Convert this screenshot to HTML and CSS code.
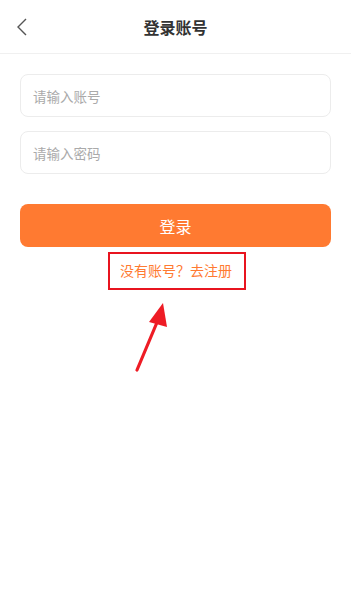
FILE: index.html
```html
<!DOCTYPE html>
<html lang="zh">
<head>
<meta charset="utf-8">
<link rel="stylesheet" href="styles.css">
</head>
<body>
<div class="page">
  <header class="nav">
    <span class="back">
      <svg width="12" height="18" viewBox="0 0 12 18"><path d="M10 1 L2 9 L10 17" fill="none" stroke="#555" stroke-width="1.4"/></svg>
    </span>
    <h1 class="title">登录账号</h1>
  </header>
  <main class="form">
    <div class="field">请输入账号</div>
    <div class="field">请输入密码</div>
    <button class="submit">登录</button>
    <div class="reg-wrap">
      <span class="reg">没有账号？去注册</span>
      <svg class="arrow" width="60" height="80" viewBox="0 0 60 80"><line x1="10" y1="72" x2="31" y2="22" stroke="#ee1c25" stroke-width="3.2" stroke-linecap="round"/><polygon points="36,5 22,24 40,29" fill="#ee1c25"/></svg>
    </div>
  </main>
</div>
</body>
</html>
```
FILE: styles.css
```css
* { box-sizing: border-box; }
html, body { margin: 0; padding: 0; background: #fff; }
body { font-family: "Noto Sans CJK SC", "Noto Sans", sans-serif; width: 351px; height: 600px; overflow: hidden; }
.page { display: flex; flex-direction: column; }
.nav { position: relative; height: 54px; border-bottom: 1px solid #f0f0f0; display: flex; align-items: center; justify-content: center; }
.back { position: absolute; left: 16px; top: 18px; display: flex; }
.title { margin: 0; font-size: 16px; font-weight: bold; color: #333; }
.form { padding: 20px 20px 0; display: flex; flex-direction: column; }
.field { height: 43px; border: 1px solid #ececec; border-radius: 8px; padding-left: 12px; display: flex; align-items: center; font-size: 13.5px; color: #aaa; margin-bottom: 14px; }
.submit { margin-top: 16px; height: 43px; border: 0; border-radius: 8px; background: #ff7a31; color: #fff; font-family: inherit; font-size: 16px; }
.reg-wrap { position: relative; display: flex; justify-content: center; margin-top: 5px; }
.reg { border: 2px solid #e8141f; padding: 6px 12px 8px 10px; font-size: 14px; color: #ff7a31; margin-left: 3px; }
.arrow { position: absolute; left: 107px; top: 46px; }
```
